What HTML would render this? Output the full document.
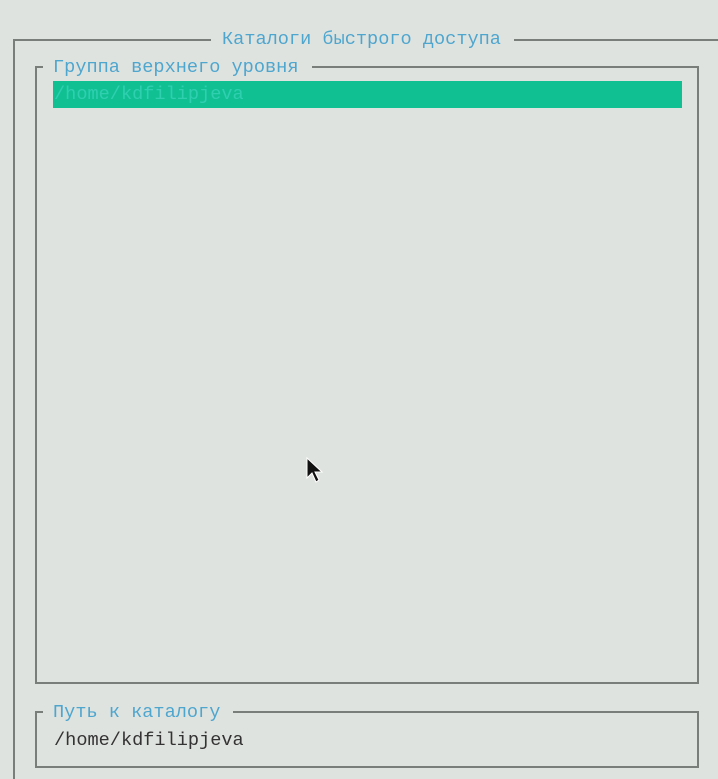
<!DOCTYPE html>
<html><head><meta charset="utf-8"><style>
html,body{margin:0;padding:0}
body{width:718px;height:779px;background:#dfe3df;position:relative;overflow:hidden;font-family:"Liberation Mono","DejaVu Sans Mono",monospace;font-size:18.6px}
.h{position:absolute;height:2px;background:#7a7e7a}
.v{position:absolute;width:2px;background:#7a7e7a}
.t{position:absolute;line-height:22px;white-space:pre;color:#4ea6cf}
</style></head><body>
<!-- outer -->
<div class="h" style="left:13px;top:39px;width:198px"></div>
<div class="h" style="left:514px;top:39px;width:204px"></div>
<div class="v" style="left:13px;top:39px;height:740px"></div>
<div class="t" style="left:222px;top:29px">Каталоги быстрого доступа</div>
<!-- group -->
<div class="h" style="left:35px;top:66px;width:8px"></div>
<div class="h" style="left:312px;top:66px;width:387px"></div>
<div class="v" style="left:35px;top:66px;height:618px"></div>
<div class="v" style="left:697px;top:66px;height:618px"></div>
<div class="h" style="left:35px;top:682px;width:664px"></div>
<div class="t" style="left:53px;top:57px">Группа верхнего уровня</div>
<div style="position:absolute;left:53px;top:81px;width:629px;height:27px;background:#10c093"></div>
<div class="t" style="left:54px;top:84px;color:#2fcfb0">/home/kdfilipjeva</div>
<!-- path -->
<div class="h" style="left:35px;top:711px;width:8px"></div>
<div class="h" style="left:233px;top:711px;width:466px"></div>
<div class="v" style="left:35px;top:711px;height:57px"></div>
<div class="v" style="left:697px;top:711px;height:57px"></div>
<div class="h" style="left:35px;top:766px;width:664px"></div>
<div class="t" style="left:53px;top:702px">Путь к каталогу</div>
<div class="t" style="left:54px;top:730px;color:#333">/home/kdfilipjeva</div>
<svg style="position:absolute;left:305px;top:457px" width="20" height="28" viewBox="0 0 20 28">
<path d="M2 1 L2 21 L7 16 L11 25 L14 23 L10 15 L17 15 Z" fill="#111" stroke="#fff" stroke-width="1"/>
</svg>
</body></html>
